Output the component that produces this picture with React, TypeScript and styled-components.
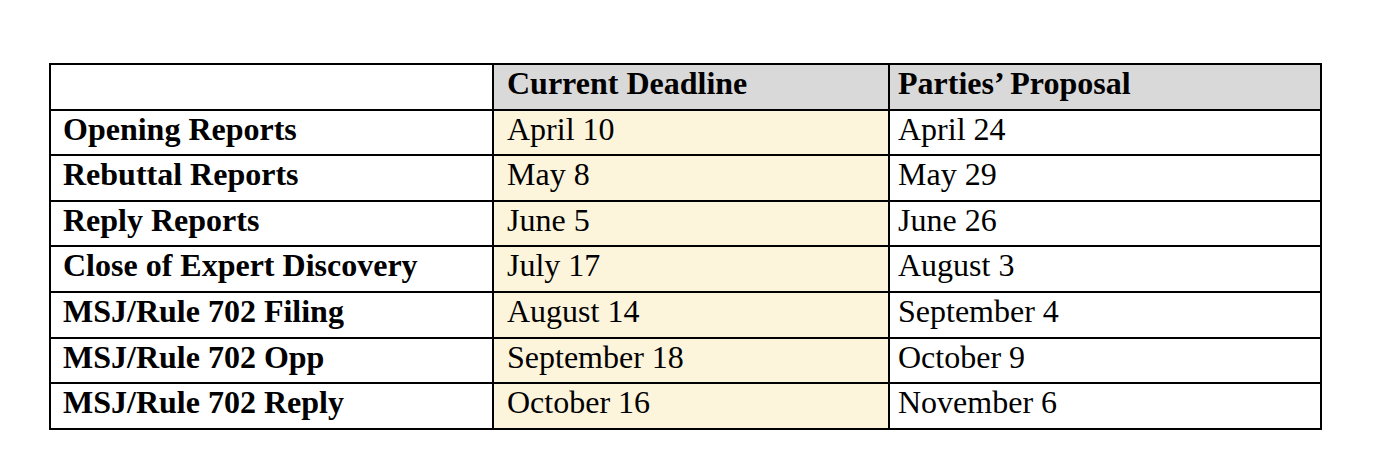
import React from 'react'
import styled, { createGlobalStyle } from 'styled-components'

type Row = {
  label: string
  current: string
  proposal: string
}

const rows: Row[] = [
  { label: 'Opening Reports', current: 'April 10', proposal: 'April 24' },
  { label: 'Rebuttal Reports', current: 'May 8', proposal: 'May 29' },
  { label: 'Reply Reports', current: 'June 5', proposal: 'June 26' },
  { label: 'Close of Expert Discovery', current: 'July 17', proposal: 'August 3' },
  { label: 'MSJ/Rule 702 Filing', current: 'August 14', proposal: 'September 4' },
  { label: 'MSJ/Rule 702 Opp', current: 'September 18', proposal: 'October 9' },
  { label: 'MSJ/Rule 702 Reply', current: 'October 16', proposal: 'November 6' },
]

const GlobalStyle = createGlobalStyle`
  html, body {
    margin: 0;
    background: #ffffff;
  }
  body {
    font-family: "Liberation Serif", "Times New Roman", serif;
    color: #000000;
  }
`

const Page = styled.div`
  width: 1384px;
  height: 470px;
  padding: 63px 0 0 49px;
  box-sizing: border-box;
`

const Grid = styled.div`
  display: grid;
  grid-template-columns: 441px 394px 430px;
  grid-auto-rows: 43.6px;
  gap: 2px;
  padding: 2px;
  width: max-content;
  background: #000000;
`

type CellKind = 'label' | 'current' | 'proposal'

const Cell = styled.div<{ $kind: CellKind; $head?: boolean }>`
  background: ${({ $kind, $head }) =>
    $head ? ($kind === 'label' ? '#ffffff' : '#d9d9d9') : $kind === 'current' ? '#fdf4dc' : '#ffffff'};
  font-size: 32px;
  line-height: 34px;
  font-weight: ${({ $kind, $head }) => ($head || $kind === 'label' ? 700 : 400)};
  padding: 1px 0 0 ${({ $kind }) => ($kind === 'label' ? 12 : $kind === 'current' ? 13 : 8)}px;
  white-space: nowrap;
  overflow: hidden;
`

const App = () => (
  <>
    <GlobalStyle />
    <Page>
      <Grid>
        <Cell $kind="label" $head />
        <Cell $kind="current" $head>Current Deadline</Cell>
        <Cell $kind="proposal" $head>Parties’ Proposal</Cell>
        {rows.map((row) => (
          <React.Fragment key={row.label}>
            <Cell $kind="label">{row.label}</Cell>
            <Cell $kind="current">{row.current}</Cell>
            <Cell $kind="proposal">{row.proposal}</Cell>
          </React.Fragment>
        ))}
      </Grid>
    </Page>
  </>
)

export default App
